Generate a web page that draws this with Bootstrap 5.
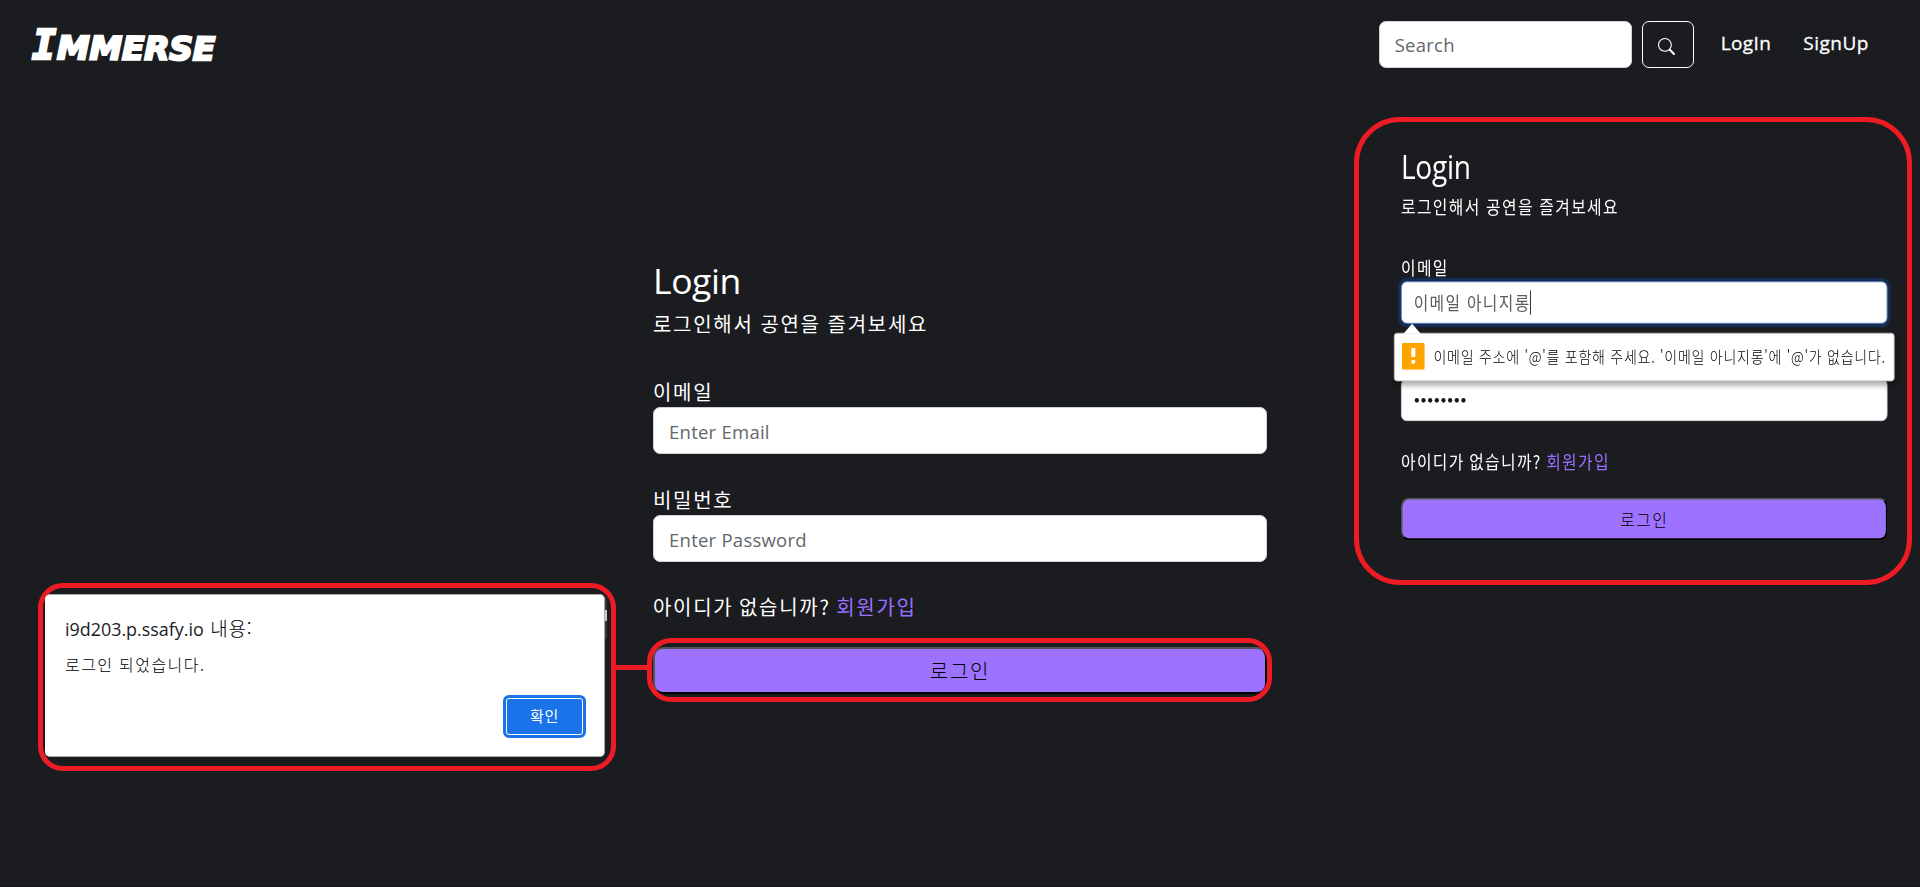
<!DOCTYPE html>
<html lang="ko">
<head>
<meta charset="utf-8">
<meta name="viewport" content="width=device-width, initial-scale=1">
<title>Immerse</title>
<link href="https://cdn.jsdelivr.net/npm/bootstrap@5.3.0/dist/css/bootstrap.min.css" rel="stylesheet">
<style>
  body { background: #1b1c1f; color: #fff; font-family: "Open Sans", "Noto Sans CJK KR", sans-serif; font-size: 20px; overflow: hidden; }
  .page { height: 887px; border-bottom: 1px solid #17141a; }
  .ko { font-family: "Noto Sans CJK KR", sans-serif; letter-spacing: 1.7px; word-spacing: -.4px; font-weight: 400; }

  /* top bar */
  .topbar { height: 89px; padding: 0 51px 0 32px; }
  .logo { font: italic 900 34px/40px "DejaVu Sans", sans-serif; color: #fff; -webkit-text-stroke: 2.4px #fff; text-decoration: none; padding-top: 4px; }
  .logo span { display: inline-block; }
  .logo .cap { font-family: "DejaVu Sans Mono", monospace; font-size: 40px; width: 25px; }
  .logo .rest { font-size: 32px; transform: scaleX(1.02) rotate(.4deg); transform-origin: left; width: 162px; }
  .form-control { height: 47px; font-size: 20px; padding: 6px 15px; border-color: #ced4da; border-radius: 7px; color: #212529; background: #fff; }
  .form-control::placeholder { color: #63676b; opacity: 1; }
  .txt-input::placeholder, .txt-input { font-size: 18.5px; letter-spacing: .25px; }
  .txt-input { padding-top: 7px; }
  .search { width: 253px; margin-right: 10px; padding-top: 6px; }
  .btn-search { width: 52px; height: 47px; border: 1px solid #fff; border-radius: 7px; margin-right: 27px; padding: 0 2px 0 0; }
  .toplink { color: #fff; text-decoration: none; font-size: 19px; font-weight: 500; line-height: 28px; margin-top: -3px; letter-spacing: .4px; -webkit-text-stroke: .3px #fff; }
  .toplink + .toplink { margin-left: 32px; letter-spacing: .5px; }

  /* login form */
  .login { width: 614px; }
  .login h2 { font-size: 35.5px; line-height: 44px; font-weight: 400; margin: 0 0 5px; letter-spacing: -.4px; }
  .sub { line-height: 34px; margin: 0 0 36px; }
  .login label { line-height: 30px; display: block; }
  .field { margin-bottom: 31px; position: relative; }
  .ask { line-height: 30px; margin: -1px 0 25px; word-spacing: -1.7px; }
  .ask a { color: #9b70ff; text-decoration: none; }
  .go { height: 47px; width: 100%; border: 2px outset #000; border-color: #555 #000 #000 #555; border-radius: 10px; background: #9d72ff; color: #000; padding: 0; position: relative; display: block; }
  .go, .tip .msg, .dialog-msg, .dialog-title .ko { font-weight: 300; }

  /* marker frames */
  .ring { border: 5px solid #ed1c24; }
  .ring-btn { position: absolute; left: -8px; top: -11px; width: 625px; height: 64px; border-radius: 24px; pointer-events: none; }

  .col-left { width: 616px; padding: 494px 0 0 38px; }
  .alertbox { width: 578px; height: 188px; border-radius: 25px; position: relative; padding: 6px 6px 0 2px; }
  .alertbox::after { content: ""; position: absolute; left: 573px; top: 77px; width: 31px; height: 5px; background: #ed1c24; }
  .dialog-box { width: 560px; height: 163px; background: #fff; border: 1px solid #a9aaab; border-width: 1px 1px 1px 0; border-radius: 5px; color: #000; padding: 19px 18px 0 20px; }
  .dialog-title { font-size: 17.9px; line-height: 28px; color: #202124; }
  .dialog-title .ko { font-size: 19px; letter-spacing: .7px; margin-left: 2px; color: #000; }
  .dialog-msg { font-size: 16px; line-height: 26px; letter-spacing: 1.45px; margin-top: 8px; }
  .okbtn { width: 83px; height: 43px; margin-top: 18px; border: 3px solid #1a73e8; border-radius: 6px; background: #1a73e8; box-shadow: inset 0 0 0 1px #fff; color: #fff; font-size: 15px; letter-spacing: .7px; padding: 0; }
  .sliver { position: absolute; left: 562px; top: 9px; width: 2px; height: 42px; background: #33363a; }
  .sliver::after { content: ""; position: absolute; top: 13px; width: 2px; height: 11px; background: #c9c9c5; }

  .col-mid { padding: 169px 0 0 37px; width: 738px; }
  .col-right { width: 558px; height: 468px; margin-top: 28px; border-radius: 46px; padding: 25px 0 0 42px; }
  .compact { transform: scale(.7923, .9016); transform-origin: 0 0; }
  .focused { border-color: #5f87c9; box-shadow: 0 0 0 4px #172c54; color: #5a5d60; display: flex; align-items: center; }
  .caret { width: 1px; height: 27px; background: #000; margin-left: -1px; }
  .tip { position: absolute; left: -9px; top: 87px; width: 632px; height: 54px; background: #fff; border: 1px solid #b5b5b5; border-radius: 4px; box-shadow: 2px 5px 6px rgba(0,0,0,.3); z-index: 2; color: #000; padding: 0 8px 2px 9px; }
  .tip::before { content: ""; position: absolute; left: 11px; top: -11px; border: solid transparent; border-width: 0 11px 11px; border-bottom-color: #fff; }
  .tip .msg { font-size: 17.7px; letter-spacing: .92px; word-spacing: 0; margin-left: 11px; white-space: nowrap; }
</style>
</head>
<body>
<div class="page">
  <nav class="topbar d-flex align-items-center">
    <a class="logo me-auto text-nowrap" href="#"><span class="cap">I</span><span class="rest">MMERSE</span></a>
    <input class="form-control txt-input search" placeholder="Search">
    <button class="btn btn-search" aria-label="Search">
      <svg width="17" height="17" viewBox="0 0 16 16" fill="#fff"><path d="M11.742 10.344a6.5 6.5 0 1 0-1.397 1.398h-.001c.03.04.062.078.098.115l3.85 3.85a1 1 0 0 0 1.415-1.414l-3.85-3.85a1.007 1.007 0 0 0-.115-.1zM12 6.5a5.5 5.5 0 1 1-11 0 5.5 5.5 0 0 1 11 0z"/></svg>
    </button>
    <a class="toplink" href="#">LogIn</a>
    <a class="toplink" href="#">SignUp</a>
  </nav>

  <main class="d-flex align-items-start">
    <div class="col-left flex-shrink-0">
      <div class="alertbox ring">
        <div class="dialog-box">
          <div class="dialog-title">i9d203.p.ssafy.io <span class="ko">내용:</span></div>
          <div class="dialog-msg ko">로그인 되었습니다.</div>
          <div class="d-flex justify-content-end"><button class="btn okbtn ko">확인</button></div>
        </div>
        <div class="sliver"></div>
      </div>
    </div>

    <div class="col-mid flex-shrink-0">
      <form class="login">
        <h2>Login</h2>
        <p class="sub ko">로그인해서 공연을 즐겨보세요</p>
        <div class="field"><label class="ko">이메일</label><input class="form-control txt-input" placeholder="Enter Email"></div>
        <div class="field"><label class="ko">비밀번호</label><input class="form-control txt-input" placeholder="Enter Password"></div>
        <p class="ask ko">아이디가 없습니까? <a href="#">회원가입</a></p>
        <button type="button" class="go ko">로그인<span class="ring ring-btn"></span></button>
      </form>
    </div>

    <section class="col-right ring flex-shrink-0">
      <form class="login compact">
        <h2>Login</h2>
        <p class="sub ko">로그인해서 공연을 즐겨보세요</p>
        <div class="field">
          <label class="ko">이메일</label>
          <div class="form-control focused ko">이메일 아니지롱<span class="caret"></span></div>
          <div class="tip d-flex align-items-center">
            <svg class="flex-shrink-0" width="29" height="30" viewBox="0 0 29 30" preserveAspectRatio="none"><rect width="29" height="30" rx="2" fill="#ffa400"/><path d="M12 6h5v10h-5z" fill="#fff"/><ellipse cx="14.5" cy="21.3" rx="2.6" ry="2.4" fill="#fff"/></svg>
            <span class="msg ko">이메일 주소에 '@'를 포함해 주세요. '이메일 아니지롱'에 '@'가 없습니다.</span>
          </div>
        </div>
        <div class="field">
          <label class="ko">&nbsp;</label>
          <div class="form-control d-flex align-items-center">
            <svg width="68" height="8" viewBox="0 0 68 8" fill="#16181b"><circle cx="4" cy="4" r="2.7"/><circle cx="12.4" cy="4" r="2.7"/><circle cx="20.8" cy="4" r="2.7"/><circle cx="29.2" cy="4" r="2.7"/><circle cx="37.6" cy="4" r="2.7"/><circle cx="46" cy="4" r="2.7"/><circle cx="54.4" cy="4" r="2.7"/><circle cx="62.8" cy="4" r="2.7"/></svg>
          </div>
        </div>
        <p class="ask ko">아이디가 없습니까? <a href="#">회원가입</a></p>
        <button type="button" class="go ko">로그인</button>
      </form>
    </section>
  </main>
</div>
<script src="https://cdn.jsdelivr.net/npm/bootstrap@5.3.0/dist/js/bootstrap.bundle.min.js"></script>
</body>
</html>
